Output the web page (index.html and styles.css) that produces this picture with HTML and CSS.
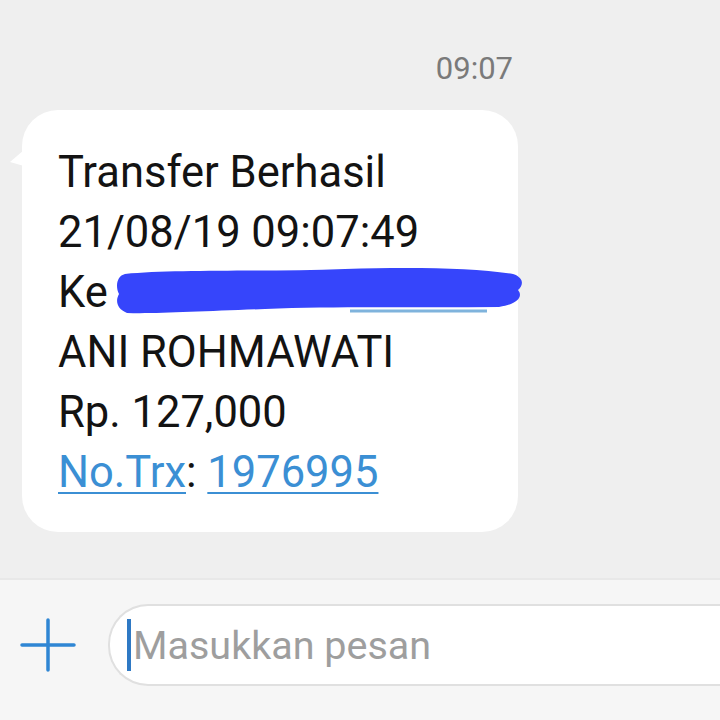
FILE: index.html
```html
<!DOCTYPE html>
<html lang="id">
<head>
    <meta charset="UTF-8">
    <meta name="viewport" content="width=device-width, initial-scale=1.0">
    <title>Pesan</title>
    <link rel="stylesheet" href="styles.css">
</head>
<body>
    <div class="screen">
        <main class="thread">
            <div class="stamp">09:07</div>
            <div class="bubble">
                <p class="line">Transfer Berhasil</p>
                <p class="line">21/08/19 09:07:49</p>
                <p class="line">Ke <span class="redact">
                    <svg width="410" height="50" viewBox="0 0 410 50">
                        <path d="M235 45 L372 45" stroke="#7fb3dc" stroke-width="3"/>
                        <path d="M10 8 C60 3 150 6 230 3 C300 1 360 2 398 8 C410 12 408 20 403 24 C408 30 404 38 384 41 C300 42 220 40 150 43 C90 45 40 48 12 47 C2 43 0 35 4 28 C0 20 2 10 10 8 Z" fill="#3645fb"/>
                    </svg></span></p>
                <p class="line">ANI ROHMAWATI</p>
                <p class="line">Rp. 127,000</p>
                <p class="line"><a class="link" href="#">No.Trx</a>: <a class="link" href="#">1976995</a></p>
            </div>
        </main>
        <footer class="composer">
            <svg class="plus" width="56" height="56" viewBox="0 0 56 56">
                <path d="M28 3 V53 M2 28 H54" stroke="#2f86d4" stroke-width="3.5" stroke-linecap="round"/>
            </svg>
            <div class="input">
                <span class="caret"></span>
                <span class="placeholder">Masukkan pesan</span>
            </div>
        </footer>
    </div>
</body>
</html>
```

FILE: styles.css
```css
body {
    margin: 0;
    padding: 0;
    font-family: Roboto, "Liberation Sans", sans-serif;
    background-color: #efefef;
}

.screen {
    width: 720px;
    height: 720px;
    display: flex;
    flex-direction: column;
    overflow: hidden;
}

.thread {
    height: 578px;
    background-color: #efefef;
    padding: 0 0 0 22px;
    box-sizing: border-box;
}

.stamp {
    color: #7a7a7a;
    font-size: 31px;
    width: 496px;
    text-align: right;
    box-sizing: border-box;
    padding: 50px 5px 0 0;
    height: 110px;
}

.bubble {
    position: relative;
    background-color: #fff;
    width: 496px;
    height: 422px;
    box-sizing: border-box;
    border-radius: 36px;
    padding: 33px 0 0 36px;
}

.bubble::before {
    content: "";
    position: absolute;
    left: -12px;
    top: 40px;
    border-top: 12px solid transparent;
    border-right: 14px solid #fff;
    border-bottom: 4px solid transparent;
}

.line {
    margin: 0;
    height: 60px;
    line-height: 60px;
    font-size: 43.5px;
    color: #131313;
    white-space: nowrap;
}

.redact {
    display: inline-block;
    vertical-align: top;
    width: 410px;
    height: 50px;
    margin: 3px 0 0 -4px;
}

.link {
    color: #3b8fd4;
    text-decoration: underline;
    text-decoration-thickness: 2px;
    text-underline-offset: 5px;
}

.composer {
    flex: 1;
    background-color: #f6f6f6;
    border-top: 2px solid #e8e8e8;
    display: flex;
    align-items: center;
    padding: 0 0 10px 20px;
}

.plus {
    flex: none;
}

.input {
    margin-left: 32px;
    flex: 1;
    height: 78px;
    background-color: #fff;
    border: 2px solid #e0e0e0;
    border-right: none;
    border-radius: 40px 0 0 40px;
    display: flex;
    align-items: center;
    padding-left: 17px;
}

.caret {
    width: 4px;
    height: 52px;
    background-color: #2f79c4;
    margin-right: 2px;
}

.placeholder {
    font-size: 39.5px;
    color: #9e9e9e;
}
```
